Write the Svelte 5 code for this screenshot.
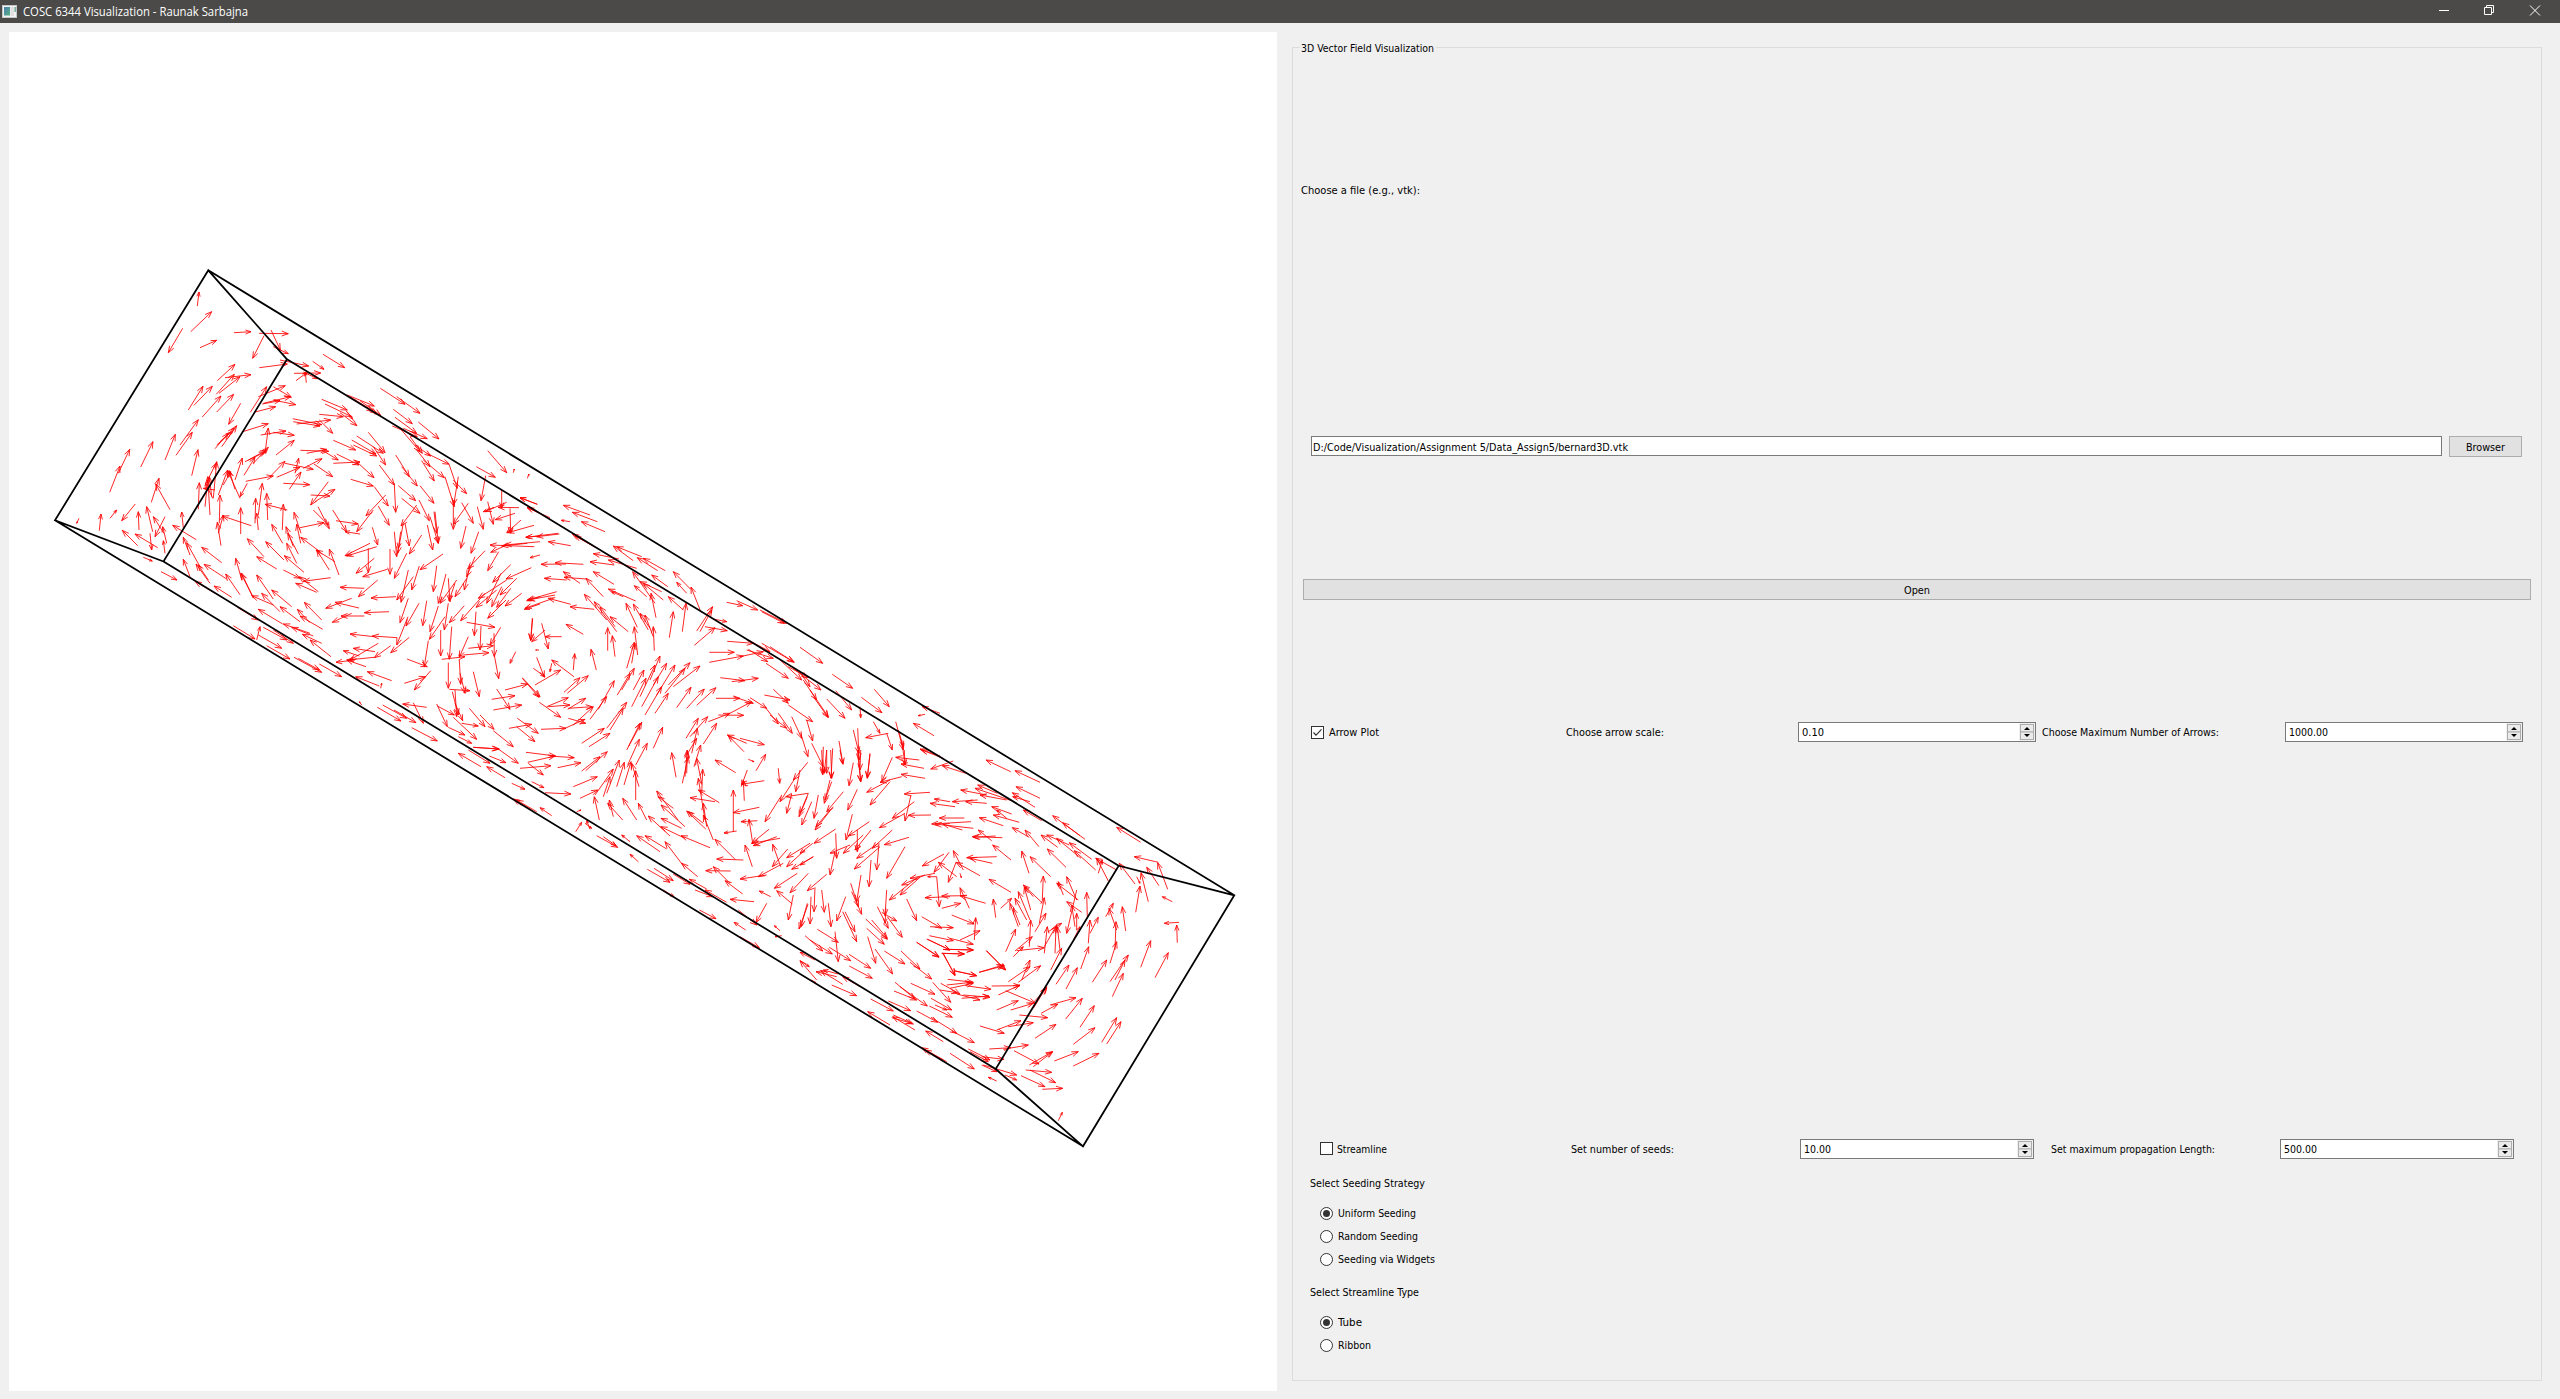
<script>
  // Glyph tables: tail x, tail y, head x, head y, three units per pixel.
  const west = `472 168 477 126 452 245 515 185 428 235 385 308 480 293 530 271 582 248 633 245 657 250 745 251 672 257 638 325 693 240 721 300 700 290 745 311 658 353 742 342 720 330 806 348 818 334 852 358 849 313 914 353 762 370 842 369 768 392 800 368 799 398 796 366 790 366 832 386 532 392 585 343 555 383 633 374 529 433 583 373 537 430 600 380 445 480 489 409 462 466 517 409 487 501 543 438 530 486 581 433 602 460 566 523 631 487 680 410 655 440 736 407 670 460 752 440 700 410 754 442 700 450 767 464 642 487 707 470 667 462 720 452 375 630 406 553 408 616 457 547 420 585 475 509 302 651 339 575 235 670 269 598 209 727 240 648 455 677 474 599 525 596 565 550 545 590 590 527 540 575 583 535 530 585 575 545 605 546 685 521 662 555 738 543 700 547 763 556 675 610 685 534 708 615 763 571 758 506 845 524 770 522 872 510 760 515 840 528 838 493 910 500 845 448 922 480 855 462 935 500 900 488 951 527 918 482 938 508 838 510 878 550 922 435 1003 468 930 440 1010 490 960 452 1022 496 945 450 1000 485 1021 415 1095 463 1070 440 1140 490 1060 478 1117 521 1065 502 1130 550 1057 528 1132 560 1135 516 1197 567 1090 535 1162 566 1080 535 1140 605 1110 560 1147 610 1125 585 1172 618 985 547 1035 608 950 558 1030 610 1000 590 1037 645 935 570 1008 612 880 571 947 600 940 585 1010 618 781 601 866 604 800 610 860 598 845 600 895 630 890 612 957 645 880 640 960 636 950 635 1002 683 932 688 1000 708 1018 645 1063 705 1067 615 1108 680 1085 650 1132 708 1145 632 1183 693 1130 600 1170 650 1150 630 1213 683 1160 610 1228 643 1228 645 1252 715 1215 680 1243 770 1255 680 1241 765 1240 690 1280 731 1240 750 1240 838 612 676 645 622 585 690 607 624 640 640 685 592 625 630 680 600 615 635 677 605 617 694 700 678 690 680 735 634 710 682 780 652 735 640 820 658 748 718 783 666 790 655 846 626 765 670 776 625 730 700 809 704 822 642 878 680 865 695 812 765 825 755 885 718 812 735 870 738 600 745 563 662 622 700 600 740 535 735 563 660 550 705 572 665 585 718 568 662 520 745 530 635 503 690 528 640 510 795 503 680 475 778 478 698 518 745 497 700 495 770 503 690 525 720 490 715 515 740 508 680 538 820 540 735 543 887 532 817 602 852 602 773 634 827 547 798 535 850 550 795 645 820 647 745 655 795 667 700 683 810 680 730 655 840 650 790 742 780 675 763 727 840 730 763 780 833 852 818 783 850 762 787 834 770 868 836 820 780 865 825 878 780 920 846 888 812 955 822 1003 710 1045 768 1037 735 978 797 1063 700 1067 787 1075 707 1127 752 1140 707 1182 760 1085 745 1140 790 1137 750 1168 812 1015 768 1048 826 1000 780 950 845 1130 765 1083 828 1185 785 1195 880 1182 785 1190 850 1170 800 1195 880 1162 825 1178 900 1063 845 1070 920 1082 845 1075 895 1095 820 1108 888 1145 855 1108 912 1090 820 1073 910 997 832 1013 885 960 852 915 845 1209 912 1140 959 1285 760 1240 823 1265 758 1300 820 1312 770 1330 838 1343 755 1360 823 1278 828 1262 895 1316 845 1293 910 1362 772 1330 785 1400 757 1335 785 1385 720 1385 775 1437 773 1374 772 1410 775 1412 850 1425 790 1366 809 1443 810 1400 848 1482 826 1403 848 1337 677 1323 752 1343 602 1400 668 1309 650 1366 682 1420 668 1423 657 1462 685 1467 672 1492 763 1440 743 1500 790 1462 773 1500 858 1457 862 1483 890 1350 885 1462 880 1385 888 1500 875 1395 885 1400 885 1352 907 1500 915 1470 923 1376 905 1343 962 1335 902 1283 957 1290 945 1273 1020 1305 920 1280 980 1412 944 1358 997 1474 953 1398 987 1400 990 1315 1045 1383 970 1340 1060 1430 985 1380 1035 1445 1030 1395 1068 1412 1015 1370 1072 1385 1010 1355 1070 1370 1020 1308 1072 1500 1040 1460 1052 1500 1062 1453 1078 1273 1067 1228 1118 1335 1030 1262 1112 1398 1050 1343 1105 210 805 230 780 117 805 110 820 178 842 183 792 286 762 245 812 297 840 295 785 334 757 357 685 390 779 347 702 293 887 247 841 353 893 285 852 330 850 335 900 338 845 320 770 372 850 340 800 375 800 345 860 380 880 368 830 375 910 370 872 430 833 425 786 469 869 398 826 450 915 430 862 480 950 440 878 545 938 485 892 450 980 430 928 510 1000 468 942 560 987 492 943 525 1030 465 994 575 1042 522 1008 505 990 475 945 600 1034 557 972 604 985 587 925 640 1042 602 970 672 920 622 866 710 957 650 920 732 930 677 875 792 967 733 917 830 1027 767 1000 835 1025 778 980 872 983 790 994 770 940 740 880 728 880 695 823 760 890 738 830 775 912 743 850 782 880 770 823 840 905 782 862 868 960 830 900 897 975 868 897 885 935 828 900 990 880 915 917 1010 890 920 918 985 895 985 968 1003 925 948 970 1042 958 968 980 1050 897 1050 973 1100 910 1063 985 973 1015 900 1012 1013 990 955 1040 1068 1040 993 1044 935 1045 857 1075 957 1074 885 1057 1047 1085 973 1088 973 1098 903 1098 935 1090 877 1117 1138 948 1115 1020 1120 980 1070 1050 1105 960 1083 1057 1190 947 1180 1025 1218 972 1195 1060 1250 990 1200 1060 1225 985 1230 1055 1245 1000 1227 1052 1280 985 1245 1040 1105 1045 1080 1118 1137 1060 1098 1128 1160 1052 1148 1127 1195 1068 1170 1145 1225 1060 1213 1140 1215 1100 1168 1168 1108 1162 1052 1208 1104 1100 1070 1185 1072 1163 997 1158 1003 1160 930 1152 1052 1187 1003 1223 1005 1205 940 1195 1015 1180 930 1230 958 1218 910 1202 1003 1222 922 1230 945 1230 888 1237 1055 1292 982 1265 978 1250 920 1230 1018 1308 947 1280 1022 1315 1025 1300 1101 1227 1162 1250 1172 1262 1123 1320 1093 1300 1157 1280 1165 1172 1153 1250 1202 1140 1202 1218 1235 1130 1228 1228 1205 1228 1275 1220 1285 1160 1258 1222 1308 1085 1303 1157 1280 1117 1365 1132 1323 1128 1320 1200 1382 1132 1350 1185 1362 1150 1363 1220 1270 1215 1347 1208 1285 1195 1360 1187 1225 1238 1225 1315 1258 1230 1262 1303 1260 1270 1275 1330 1300 1265 1318 1340 1363 1215 1376 1286 1427 1205 1410 1240 1478 1105 1472 1172 1228 1318 1290 1322 1237 1325 1255 1395 1245 1320 1250 1400 1192 1368 1243 1395 1190 1362 1222 1430 1245 1360 1268 1412 1288 1375 1335 1430 1160 1372 1088 1362 1120 1358 1150 1420 1265 1420 1315 1428 1225 1432 1275 1455 1240 1402 1310 1468 1255 1460 1295 1480 1320 1395 1362 1438 1360 1442 1420 1490 1300 1492 1378 1497 1370 1317 1410 1378 1395 1320 1463 1302 1447 1283 1500 1340 1355 1348 1425 1337 1360 1380 1445 1365 1407 1435 1475 1423 1432 1405 1495 1450 1430 1430 1485 1475 650 1170 660 1130 640 1045 605 970 700 1047 650 975 720 1085 665 1030 755 1070 695 1020 700 1065 635 1037 780 1115 720 1070 810 1118 772 1078 845 1110 793 1057 848 1138 780 1098 728 1122 655 1078 810 1150 730 1122 820 1158 755 1132 845 1180 787 1153 873 1220 810 1170 592 1072 655 1110 700 1140 760 1180 670 1132 740 1170 580 1127 645 1167 655 1155 725 1195 680 1187 750 1227 762 1222 845 1267 775 1225 838 1260 838 1242 905 1280 310 922 337 933 363 965 411 990 1012 1372 1083 1413 1028 1365 1100 1405 1062 1380 1128 1418 1115 1433 1192 1473 965 1365 958 1355 730 960 780 985`;

  const middle = `292 163 240 143 330 203 262 173 450 195 370 166 472 215 397 187 495 245 424 215 390 215 364 211 355 250 258 262 392 287 325 275 358 252 290 260 465 292 397 252 455 285 405 258 580 332 520 288 605 320 530 290 653 362 592 323 676 362 610 325 590 355 505 330 537 327 460 311 523 345 450 335 430 343 345 338 378 342 303 343 420 400 370 365 438 387 372 382 380 390 313 385 522 403 460 365 490 440 438 385 350 425 262 450 345 435 265 450 340 445 255 475 392 463 325 445 463 478 390 470 587 453 505 417 550 440 515 425 645 460 578 365 665 425 600 395 670 450 610 400 683 410 635 375 740 430 710 397 752 418 700 365 783 487 753 411 730 480 685 440 620 440 583 407 648 503 633 430 530 545 463 455 500 510 433 433 565 545 510 500 525 530 480 470 592 532 558 460 625 540 580 462 640 560 615 495 630 535 600 490 643 602 640 530 593 615 583 530 688 563 700 485 727 545 738 460 770 543 818 470 763 586 825 533 780 545 815 480 795 530 862 542 820 507 860 515 860 457 908 467 890 452 953 480 960 480 1040 520 965 485 1033 520 560 655 583 577 575 640 585 580 430 553 378 523 503 602 503 533 525 620 517 557 469 660 453 598 400 660 404 611 402 680 335 630 277 505 272 570 305 520 325 597 365 560 315 560 315 540 275 575 297 600 287 600 290 622 313 682 280 655 315 680 285 705 362 660 335 640 330 665 247 685 297 742 372 727 420 683 382 730 445 677 320 770 385 743 298 757 362 802 325 770 390 765 383 778 437 745 385 775 457 770 400 825 460 770 385 805 437 820 303 838 378 835 375 835 435 808 425 880 493 835 447 890 510 850 450 808 500 740 475 778 523 692 532 735 570 670 545 720 583 655 580 720 612 660 575 770 618 685 600 740 645 645 630 690 660 618 605 770 655 680 640 705 680 640 615 795 665 710 650 735 705 645 645 790 685 730 675 730 735 655 685 705 750 638 700 710 780 648 710 773 753 712 740 775 793 717 770 766 828 713 500 835 560 757 510 840 550 775 560 900 605 817 565 890 600 820 563 945 598 868 587 945 622 880 640 895 668 832 808 607 883 607 808 637 910 618 862 574 940 580 900 620 970 605 925 570 990 605 920 600 1000 625 925 598 983 635 965 580 1063 637 990 590 1060 635 978 640 1045 685 1080 592 1148 640 1020 630 1085 690 1045 650 1105 683 1060 655 1143 720 1075 660 1110 710 1090 690 1130 750 1120 740 1165 803 1110 720 1165 800 1177 673 1238 715 1303 718 1348 770 1264 742 1326 788 1187 722 1235 780 1160 747 1215 805 1260 770 1262 803 841 683 915 692 875 695 955 685 828 745 900 745 1000 718 1045 760 973 735 1050 750 1045 765 1118 815 880 740 940 760 930 743 980 775 860 795 935 755 805 815 870 790 835 795 911 796 978 775 1015 822 990 795 1040 835 1015 790 1057 850 1055 800 1085 865 1100 810 1118 873 1082 850 1104 920 1115 880 1150 950 750 860 803 800 738 865 775 805 755 910 772 835 790 882 830 820 740 915 770 865 735 980 742 900 727 1000 745 920 762 950 782 885 740 970 742 905 708 982 695 908 785 1000 770 925 785 1030 788 958 800 1130 790 1060 795 1110 775 985 838 1058 775 1020 825 1055 750 1043 912 905 865 857 920 880 862 855 900 865 973 884 887 968 825 930 948 962 977 913 925 928 942 935 922 960 905 1005 973 992 903 1003 913 1052 910 990 880 1145 880 1020 958 1072 880 1088 952 1112 903 1115 1015 955 1019 1000 1103 937 1060 990 1080 960 1067 1025 1105 1030 1037 1040 1065 985 1020 1055 1022 1040 975 1115 1055 1032 1040 1090 1102 1040 1077 1100 890 1143 852 1149 938 1180 927 1108 987 1138 935 1180 1010 1160 940 1187 1020 1165 935 1180 937 1250 915 1185 1022 1250 998 1183 1043 1197 997 1250 1110 1180 1040 1223 1095 1200 1040 1250 1120 1220 1055 1258 1030 1240 955 1280 980 1275 900 1287 910 1230 830 1227 885 1228 825 1168 872 1263 797 1262 870 1300 820 1250 908 1332 855 1292 942 1355 870 1348 992 1340 958 1323 1057 1362 1010 1322 1072 1270 1003 1315 1105 1270 1050 1328 980 1360 948 1418 1060 1335 1045 1410 1104 1363 1077 1437 735 1130 663 1065 714 1110 650 1023 700 1075 655 1040 797 1137 740 1083 790 1120 745 1085 820 1170 790 1095 725 1135 663 1105 735 1165 662 1130 690 1158 625 1098 810 1193 723 1157 730 1247 675 1175 773 1280 725 1240 680 1197 615 1157 660 1205 590 1157 570 1175 545 1155 620 1110 595 1060 590 1110 548 1045 587 1050 587 962 597 1010 575 940 548 1110 503 1060 520 1100 508 1050 478 1110 463 1040 465 1035 520 957 490 1040 510 980 500 1030 538 930 530 1010 553 937 552 1005 573 935 420 1045 473 1020 400 1010 472 980 425 963 480 920 437 962 502 905 353 953 423 938 330 918 403 923 258 907 347 918 263 937 345 918 240 955 333 947 265 940 310 975 100 892 175 897 172 895 235 940 123 950 55 910 85 900 150 940 148 918 198 938 195 983 140 950 215 1000 255 1018 275 995 312 1013 315 1028 393 1032 275 1080 220 1047 335 1097 300 1073 290 1085 230 1050 407 1145 425 1117 410 1085 423 1080 435 1120 455 1135 450 1138 440 1112 470 1157 533 1192 490 1160 528 1187 595 1235 570 1213 622 1258 690 1297 642 1255 700 1292 700 1272 750 1303 800 1317 748 1288 860 1357 795 1320 765 1320 818 1340 670 1320 702 1340 778 1380 828 1406 917 1440 882 1417 900 1460 958 1493 895 1380 950 1425 1020 1442 1003 1427 1025 1457 1005 1460 1150 890 1148 970 1160 900 1160 970 1178 895 1173 985 1197 873 1209 943 1240 840 1257 910 1253 835 1257 930 1255 900 1262 995 1290 912 1282 985 1345 850 1277 863 1300 815 1320 850 1340 850 1357 900 1367 815 1390 900 1375 840 1390 890 1385 870 1395 945 1482 857 1420 820 1500 790 1447 770 1455 793 1435 797 1500 918 1440 897`;

  const east = `65 0 68 75 80 0 73 70 92 0 95 85 120 0 128 42 160 38 147 107 172 0 182 95 182 0 180 60 210 10 202 83 277 22 245 95 358 30 287 22 372 55 303 42 313 0 315 45 430 25 365 0 460 33 392 57 497 70 427 47 375 85 303 73 305 80 240 97 270 90 200 127 270 95 210 165 130 125 80 185 172 118 143 180 55 135 42 205 25 130 0 190 90 90 73 160 95 95 75 150 35 155 5 225 100 170 45 240 90 180 48 230 107 237 42 280 157 193 138 270 208 215 145 258 390 127 313 132 343 155 277 205 333 135 315 213 393 195 325 196 315 190 238 233 465 170 390 160 450 155 403 147 533 150 457 155 560 160 497 155 560 135 482 120 592 130 533 105 635 152 525 115 620 150 540 135 632 65 558 30 720 97 645 62 720 145 648 110 705 172 637 128 690 155 638 140 635 192 575 170 658 217 580 195 620 205 590 180 725 212 670 180 855 268 758 197 840 257 788 218 1022 277 950 232 493 204 418 204 513 215 395 222 520 235 405 222 487 240 428 222 610 227 538 203 607 263 517 260 575 272 535 240 587 258 520 262 590 320 500 323 577 340 510 325 633 330 578 285 688 262 637 233 717 290 675 240 773 292 723 255 798 352 742 297 808 285 740 255 843 325 770 265 875 328 808 278 887 360 823 302 950 360 887 325 925 393 890 325 895 370 907 330 1005 402 958 340 1075 337 1003 320 1103 418 1073 338 1077 407 1040 352 1045 455 1023 368 1007 487 1020 408 1010 380 1020 400 1117 455 1087 440 1137 517 1093 520 1132 578 1130 525 977 543 967 470 950 540 927 475 917 500 940 460 327 262 253 284 277 240 217 295 240 290 163 357 235 280 170 325 213 240 165 300 172 240 172 305 107 250 110 325 190 255 130 310 150 285 90 310 105 305 90 375 80 373 22 422 40 320 0 345 38 280 0 310 315 290 260 385 237 280 230 360 213 330 207 410 183 375 170 455 152 400 175 470 155 425 185 493 137 440 110 513 128 485 170 575 135 485 165 545 260 420 255 497 232 470 265 535 258 475 255 520 65 420 73 487 45 412 42 485 33 440 30 522 85 460 93 530 22 460 3 530 432 312 367 348 447 307 402 367 405 370 330 385 375 375 305 405 355 380 268 450 360 382 300 435 410 380 383 380 468 337 445 397 540 377 468 337 490 360 460 302 470 380 415 337 480 370 484 383 410 380 418 470 450 440 375 443 500 437 425 438 557 460 480 437 508 475 480 413 425 475 482 460 633 427 567 388 687 370 665 303 752 380 690 320 728 460 670 405 700 440 675 410 727 450 730 378 692 480 673 412 690 510 655 425 680 510 645 445 655 530 630 460 660 525 640 475 587 503 580 447 602 475 635 445 320 447 350 512 365 500 425 535 390 530 460 533 388 557 460 572 455 495 522 522 523 570 527 503 480 570 540 542 450 565 520 583 380 567 450 600 440 598 520 600 350 577 417 620 425 610 493 612 430 610 465 677 560 602 617 660 537 667 610 645 465 663 530 677 617 605 647 537 645 603 697 560 650 602 733 593 640 620 670 590 688 590 692 510 705 545 738 490 718 520 733 443 733 610 742 530 733 590 770 525 765 610 768 530 745 545 785 520 780 600 772 530 830 420 800 550 845 487 800 455 835 450 770 400 830 450 800 380 790 435 775 395 825 530 815 465 830 540 830 490 862 500 860 427 865 580 870 510 870 550 895 502 842 657 866 590 930 640 950 575 945 600 948 515 877 697 920 630 930 695 985 615 945 690 975 630 937 740 970 670 1022 652 1052 572 1065 683 1105 608 752 660 785 595 768 703 807 645 798 717 832 653 820 570 840 530 655 697 722 647 625 695 690 650 665 690 690 630 595 735 660 705 590 780 655 752 617 722 707 760 632 780 700 760 700 775 740 710 688 770 740 715 723 790 773 763 750 765 828 743 797 807 847 745 840 832 883 767 705 865 768 823 820 883 885 833 905 877 950 803 920 882 963 815 820 948 897 910 763 933 835 905 688 945 757 905 700 950 758 905 625 830 700 818 658 795 743 803 590 840 663 812 540 828 613 850 568 897 632 893 610 898 685 885 642 902 717 942 677 960 755 967 690 960 767 998 663 977 735 1010 727 1018 788 1015 775 1112 787 1087 615 975 650 990 545 920 612 928 505 897 570 930 510 905 565 935 550 945 650 975 545 945 590 965 590 993 565 982 340 945 340 945 450 910 523 957 440 935 365 893 430 930 375 900 270 825 203 785 345 840 278 800 280 795 340 822 275 803 335 820 430 875 377 843 95 705 170 737 180 710 128 680 128 703 62 662 110 680 48 665 115 672 70 660 50 690 0 632 45 630 0 607 35 690 47 698 212 747 280 783 265 753 332 782 350 783 413 817 393 802 470 850 455 843 523 878 285 697 345 747 282 723 350 750 332 700 405 733 300 710 382 768 393 745 455 780 388 768 457 802 405 765 440 780 398 697 452 757 303 603 360 657 330 637 395 687 350 577 417 622 428 610 465 675 383 568 450 600 440 598 520 600 425 610 493 612 538 667 613 647 558 602 616 660 463 662 530 677 443 688 520 697 440 705 515 697 450 715 520 700 497 707 573 718 422 700 480 732 420 720 470 728 575 708 660 707 485 745 567 738 470 732 540 750 490 735 570 742 253 603 315 642 225 597 278 672 203 560 227 640 200 535 253 583 197 507 262 568 215 510 262 565 245 487 290 513 262 500 307 562 147 613 212 655 148 648 217 685 88 592 152 632 52 538 115 577 105 545 115 635 15 557 68 603 30 570 97 612 0 632 28 650`;

  const groups = [
    { ox: 40, oy: 250, raw: west },
    { ox: 440, oy: 450, raw: middle },
    { ox: 800, oy: 750, raw: east }
  ];

  function glyph(x1, y1, x2, y2) {
    const dx = x2 - x1, dy = y2 - y1, len = Math.hypot(dx, dy);
    if (len < 1) return '';
    const ux = dx / len, uy = dy / len;
    const h = Math.min(6.6, len * 0.32), w = h * 0.37;
    const bx = x2 - ux * h, by = y2 - uy * h;
    const f = (n) => n.toFixed(1);
    return `M${f(x1)} ${f(y1)}L${f(x2)} ${f(y2)}M${f(bx - uy * w)} ${f(by + ux * w)}L${f(x2)} ${f(y2)}L${f(bx + uy * w)} ${f(by - ux * w)}`;
  }

  const field = groups.map(({ ox, oy, raw }) => {
    const n = raw.split(/\s+/).map(Number);
    let d = '';
    for (let i = 0; i + 3 < n.length; i += 4) {
      d += glyph(ox + n[i] / 3, oy + n[i + 1] / 3, ox + n[i + 2] / 3, oy + n[i + 3] / 3);
    }
    return d;
  });

  let arrowPlot = $state(true);
  let streamline = $state(false);
  let seeding = $state('Uniform Seeding');
  let shape = $state('Tube');
</script>

{#snippet label(text, w)}
  <svg class="text" width={w} height="16"><text x="0" y="12" textLength={w} lengthAdjust="spacingAndGlyphs">{text}</text></svg>
{/snippet}

{#snippet check(on)}
  <svg class="mark" width="13" height="13" viewBox="0 0 13 13">
    <rect x=".5" y=".5" width="12" height="12" fill="#fff" stroke="#333" />
    {#if on}<path d="M2.5 6.5 5 9.2 10.5 3.4" fill="none" stroke="#333" stroke-width="1.2" />{/if}
  </svg>
{/snippet}

{#snippet radio(on)}
  <svg class="mark" width="13" height="13" viewBox="0 0 13 13">
    <circle cx="6.5" cy="6.5" r="6" fill="#fff" stroke="#333" />
    {#if on}<circle cx="6.5" cy="6.5" r="3.5" fill="#333" />{/if}
  </svg>
{/snippet}

{#snippet spin(value, w)}
  <div class="spin">
    {@render label(value, w)}
    <svg width="16" height="18" viewBox="0 0 16 18">
      <rect width="16" height="18" fill="#f0f0f0" />
      <rect x="1.5" y="1.5" width="13" height="7.5" fill="#ebebeb" stroke="#adadad" />
      <rect x="1.5" y="9" width="13" height="7.5" fill="#ebebeb" stroke="#adadad" />
      <path d="M5.5 7h5v-1h-1v-1h-1v-1h-1v1h-1v1h-1zM5.5 11h5v1h-1v1h-1v1h-1v-1h-1v-1h-1z" fill="#000" />
    </svg>
  </div>
{/snippet}

<div class="window">
  <header>
    <svg class="app" width="16" height="14" viewBox="0 0 16 14">
      <defs><linearGradient id="pane" x2="1" y2="1"><stop offset="0" stop-color="#4c7fae" /><stop offset="1" stop-color="#56ae84" /></linearGradient></defs>
      <rect x=".5" y=".5" width="14" height="12" fill="#f3f3f3" stroke="#c5c8cb" />
      <rect x="2" y="2" width="6" height="8.5" fill="url(#pane)" />
      <rect x="8.5" y="2" width="3.5" height="9" fill="#e0e0e0" />
      <rect x="12.5" y="2" width="1.4" height="5" fill="#6ca791" />
    </svg>
    <svg class="title" width="225" height="18"><text x="0" y="13" textLength="225" lengthAdjust="spacingAndGlyphs">COSC 6344 Visualization - Raunak Sarbajna</text></svg>
    <svg class="controls" width="102" height="12" viewBox="0 0 102 12" fill="none" stroke="#fff">
      <path d="M0 5.5h10M45.500 2.500h7v7h-7zM47.500 2.500v-2h7v7h-2" />
      <path d="M91 .5l10 10M101 .5l-10 10" />
    </svg>
  </header>
  <main>
    <div class="view">
      <svg width="1268" height="1359" viewBox="9 32 1268 1359">
        <g class="field">{#each field as d}<path {d} />{/each}</g>
        <path class="outline" d="M208.300 270.300 55 520.300 163.500 561.500 287 359.300ZM1234.300 895.300 1083 1146.300 995.700 1069 1118.700 865.700ZM208.300 270.300 1234.300 895.300M55 520.300 1083 1146.300M287 359.300 1118.700 865.700M163.500 561.500 995.700 1069" />
      </svg>
    </div>
    <section class="group">
      <div class="legend">{@render label('3D Vector Field Visualization', 133)}</div>
      <div class="choose">{@render label('Choose a file (e.g., vtk):', 119)}</div>
      <div class="file">
        <div class="edit">{@render label('D:/Code/Visualization/Assignment 5/Data_Assign5/bernard3D.vtk', 315)}</div>
        <button class="browse">{@render label('Browser', 39)}</button>
      </div>
      <button class="open">{@render label('Open', 26)}</button>
      <div class="arrows row">
        <button class="option" onclick={() => (arrowPlot = !arrowPlot)}>{@render check(arrowPlot)}{@render label('Arrow Plot', 50)}</button>
        {@render label('Choose arrow scale:', 98)}
        {@render spin('0.10', 22)}
        {@render label('Choose Maximum Number of Arrows:', 177)}
        {@render spin('1000.00', 39)}
      </div>
      <div class="stream row">
        <button class="option" onclick={() => (streamline = !streamline)}>{@render check(streamline)}{@render label('Streamline', 50)}</button>
        {@render label('Set number of seeds:', 103)}
        {@render spin('10.00', 27)}
        {@render label('Set maximum propagation Length:', 164)}
        {@render spin('500.00', 33)}
      </div>
      <div class="heading">{@render label('Select Seeding Strategy', 115)}</div>
      <div class="choices">
        {#each [['Uniform Seeding', 78], ['Random Seeding', 80], ['Seeding via Widgets', 97]] as [name, w]}
          <button class="option" onclick={() => (seeding = name)}>{@render radio(seeding === name)}{@render label(name, w)}</button>
        {/each}
      </div>
      <div class="heading second">{@render label('Select Streamline Type', 109)}</div>
      <div class="choices">
        {#each [['Tube', 24], ['Ribbon', 33]] as [name, w]}
          <button class="option" onclick={() => (shape = name)}>{@render radio(shape === name)}{@render label(name, w)}</button>
        {/each}
      </div>
    </section>
  </main>
</div>

<style>
  :global(body) { margin: 0; background: #f0f0f0; }
  * { box-sizing: border-box; }
  svg { display: block; flex: none; }
  button { font: inherit; padding: 0; border: 0; background: none; }
  .window { width: 2560px; height: 1399px; display: flex; flex-direction: column; overflow: hidden; background: #f0f0f0; }
  header { height: 23px; flex: none; display: flex; align-items: flex-start; background: #4b4a48; padding: 0 19px 0 2px; }
  .app { margin-top: 5px; }
  .title { margin: 3px 0 0 5px; overflow: visible; font: 12px "Open Sans", "Noto Sans", sans-serif; fill: #fff; }
  .controls { margin: 5px 0 0 auto; }
  main { flex: 1; display: flex; padding: 9px 18px 8px 9px; }
  .view { width: 1268px; background: #fff; }
  .field path { fill: none; stroke: #f00; stroke-width: 0.85; }
  .outline { fill: none; stroke: #000; stroke-width: 1.75; }
  .text { overflow: visible; font: 11px "DejaVu Sans Condensed", "DejaVu Sans", sans-serif; fill: #000; }
  .group { width: 1250px; height: 1334px; margin: 15px 0 0 15px; border: 1px solid #dcdcdc; display: flex; flex-direction: column; align-items: stretch; }
  .legend { width: 136px; height: 16px; margin: -8px 0 0 7px; padding-left: 1px; background: #f0f0f0; }
  .choose { margin: 126px 0 0 8px; }
  .file { display: flex; gap: 7px; margin: 238px 19px 0 18px; height: 21px; }
  .edit { flex: 1; height: 20px; background: #fff; border: 1px solid #7a7a7a; padding: 2px 0 0 1px; }
  .browse, .open { display: flex; justify-content: center; align-items: center; background: #e1e1e1; border: 1px solid #adadad; height: 21px; }
  .browse { width: 73px; }
  .open { margin: 122px 10px 0 10px; }
  .row { display: grid; height: 20px; align-items: center; }
  .arrows { margin: 122px 17px 0 18px; grid-template-columns: 255px 232px 244px 243px 238px; }
  .arrows .spin { width: 238px; }
  .stream { margin: 397px 26px 0 27px; grid-template-columns: 251px 229px 251px 229px 234px; }
  .stream .spin { width: 234px; }
  .spin { height: 20px; background: #fff; border: 1px solid #7a7a7a; display: flex; justify-content: space-between; padding-left: 3px; align-items: center; }
  .option { display: flex; align-items: center; gap: 5px; height: 16px; }
  .stream .option { gap: 4px; margin-top: -1px; }
  .heading { margin: 16px 0 0 17px; }
  .second { margin-top: 17px; }
  .choices { display: flex; flex-direction: column; gap: 7px; margin: 14px 0 0 27px; }
</style>
